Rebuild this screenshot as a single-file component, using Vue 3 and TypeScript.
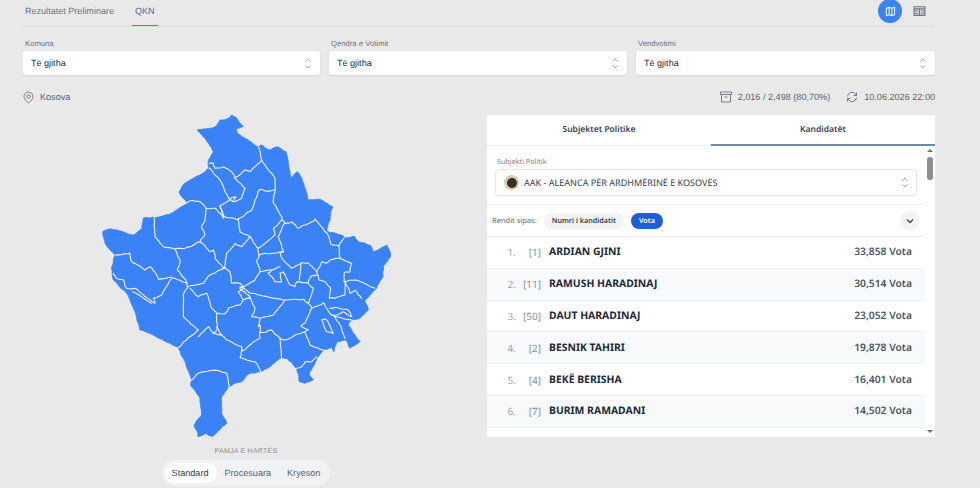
<script setup lang="ts">
const filters = [
  { label: 'Komuna', value: 'Të gjitha' },
  { label: 'Qendra e Votimit', value: 'Të gjitha' },
  { label: 'Vendvotimi', value: 'Të gjitha' },
]
const rows = [
  { pos: '1.', num: '[1]', name: 'ARDIAN GJINI', votes: '33,858 Vota' },
  { pos: '2.', num: '[11]', name: 'RAMUSH HARADINAJ', votes: '30,514 Vota' },
  { pos: '3.', num: '[50]', name: 'DAUT HARADINAJ', votes: '23,052 Vota' },
  { pos: '4.', num: '[2]', name: 'BESNIK TAHIRI', votes: '19,878 Vota' },
  { pos: '5.', num: '[4]', name: 'BEKË BERISHA', votes: '16,401 Vota' },
  { pos: '6.', num: '[7]', name: 'BURIM RAMADANI', votes: '14,502 Vota' },
]

type Pt = [number, number]

function parse(s: string): Pt[] {
  return s.trim().split(/\s+/).map((p) => {
    const [x, y] = p.split(',').map(Number)
    return [x, y] as Pt
  })
}

function noise(x: number, y: number): number {
  const v = Math.sin(x * 12.9898 + y * 78.233) * 43758.5453
  return (v - Math.floor(v)) * 2 - 1
}

function rough(a: Pt, b: Pt, amp: number): Pt[] {
  const dx = b[0] - a[0]
  const dy = b[1] - a[1]
  const len = Math.hypot(dx, dy)
  if (len < 3) return [b]
  const n = noise(a[0] + b[0], a[1] + b[1]) * amp
  const m: Pt = [(a[0] + b[0]) / 2 - (dy / len) * n, (a[1] + b[1]) / 2 + (dx / len) * n]
  return [...rough(a, m, amp * 0.7), ...rough(m, b, amp * 0.7)]
}

function toPath(s: string, closed: boolean): string {
  const pts = parse(s)
  const out: Pt[] = [pts[0]]
  for (let i = 1; i < pts.length; i++) out.push(...rough(pts[i - 1], pts[i], 0.7))
  if (closed) out.push(...rough(pts[pts.length - 1], pts[0], 0.7))
  return 'M' + out.map((p) => p[0].toFixed(1) + ' ' + p[1].toFixed(1)).join('L') + (closed ? 'Z' : '')
}

const outline = toPath(`197.3,130 210,128.3 215,126.7 220,120 226,119.3 231.7,115 236,117.3 243.3,126.7 236,128.3 237.3,133.3
248.3,140 258.3,146.7 261.7,145 270,150 277.3,146.7 286,151.7 291,178.3 297.3,171.7 301.7,178.3 308.3,200 320,199.3 332.7,206.7
330,220 326.7,231.7 341.7,235 345,238.3 355,236.7 358.3,241.7 370,245 373.3,251.7 386.7,245 390.7,255 383.3,266.7 383.3,276.7
376.7,288.3 365,300 368.3,310 360,318.3 351.7,320 348.3,325 355,335 360,341.7 350,348.3 346,340 336.7,341.7 334,351.7 331.7,347.7
323.3,350 316.7,358.3 309.3,373.3 313.3,380 305,383.3 299.3,381.7 296.7,368.3 286.7,358.3 280,358.3 270,366.7 260.7,371.7 250,373.3
241.7,381.7 235,383.3 228.3,386.7 221.7,396.7 221.7,413.3 226.7,423.3 211.7,436.7 206,433.3 198.3,436.7 194,425 201.7,415 200,398.3
190.7,385.7 191.7,380 185,361.7 178.3,347.7 170,343.3 155,336 140,330 135,311.7 126.7,293.3 113.3,280 111.7,266.7 115,255 105,243.3
102.7,231.7 110,229 123,231.7 133.3,235 141.7,228.3 143.3,218 153,217 170,213 187,203 179,192 185,183 190,180 200,175 209,168 208.3,160
213.3,151.7 206,140`, true)

const borders = [
  '209.3,163.3 213.3,163 215,168.3 223.3,166.7 231.7,171.7 235,178.3 245,170 250,171.7 261.7,160 258.3,146.7',
  '261.7,160 275,178.3 275,190 265,191 260,189.3 255,200 251.7,210 238.3,219.3 225,217.3 220,206 230,200 220,180 209,168',
  '235,178.3 245,188.3 241.7,198.3 233,201.7 230,198.3 236,197 233,201.7',
  '275,190 273,201.7 281.7,216.7 281.7,220 285,223.3',
  '220,206 223.3,218.3 215,208.3 206,208.3 200,201.7 190,200.7 170,213 154,217 155,236.7 163.3,246.7 175,249 185,248.3 193.3,245 200,241.7 205,235 201.7,228.3 205,220 206,208.3',
  '175,249 180,260 177.3,270 186,280 187.3,286.7',
  '200,241.7 210,251.7 213.3,250 215,258.3 225,268.3 226.7,253.3 235,243.3 241.7,246.7 250,236.7 258.3,248.3 275,235 273.3,228.3 281.7,220',
  '238.3,219.3 240,232 250,236.7',
  '225,268.3 220,270 210,275 203.3,283.3 189.3,286',
  '225,268.3 230,271.7 231.7,283.3 240,283.3 243.3,288.3 238.3,291.7 243.3,300 250,298.3 248.3,295 240,288.3',
  '115,255 130,253.3 131.7,261.7 145,270 150,266.7 156.7,275 158.3,279.3 171.7,277.3 187.3,283.3',
  '113.3,273.3 116.7,278.3 123.3,280 126.7,288.3 135,288.3 155,303.3 153.3,298.3 161.7,295 171.7,278.3',
  '133,291.7 151.7,303.3',
  '188.3,286.7 183.3,295 183.3,316.7 198.3,330 190,336.7 178.3,347.7',
  '190,288.3 198.3,296.7 206.7,293.3 211.7,308.3 216.7,313.3 225,314 228.3,308.3 240,305 243.3,300',
  '216.7,313.3 217.3,328.3 213.3,333.3 208.3,326.7 198.3,336.7',
  '213.3,333.3 221.7,335 216.7,326.7 217.3,328.3',
  '221.7,335 226.7,340 241.7,346.7 242.7,351 260,338.3 260,325 258.3,326.7 260,318.3 273.3,315 285,300',
  '241.7,346.7 240,357.7 255,361.7 260.7,371.7',
  '260,332 266.7,331.7 271.7,330 280,338.3 285,340 295,335 305,331.7 308.3,330 301,326 305,323.3 311.7,308.3 308.3,303.3 313.3,288.3 308.3,283.3',
  '280,338.3 281.7,358.3',
  '305,331.7 310,345 318.3,348.3 323.3,350',
  '296.7,368.3 301.7,366.7 305,361.7 311.7,361.7 316.7,356.7',
  '315,219 325,231.7 328,235 330.7,244 339,246 344,238',
  '339,246 340,258.3 330,260 326,263.3 321.7,261.7 316.7,271.7 308,262.7 301.7,262.7 291.7,268.3 283.3,260 280,253.3 283.3,251.7 278.3,236.7 281.7,228.3 285,223.3 291.7,221.7 298.3,228.3 305,225 315,220',
  '258.3,248.3 259,255 265,253.3 275,253.3 283.3,251.7',
  '259,255 256.7,261.7 260,271.7 271.7,270 280,266.7',
  '260,271.7 255,280 246.7,285 240,288.3',
  '271.7,270 268,273 275,281.7 281.7,281.7 280,273 283.3,271.7 290,285 295,286.7 296.7,281.7 308.3,283.3 310.7,276.7 316.7,275',
  '301.7,262.7 299.3,280',
  '316.7,271.7 319.3,280 325,281.7 330.7,288.3 329.3,298.3 335,298.3 345,295 345,281.7 350,293.3 355,290 361.7,298.3',
  '340,258.3 351.7,263.3 350,271.7 344,273.3 344,281.7 355,280 375,288.3',
  '240,286.7 250,293.3 260,295 275,298.3 285,300 303.3,299.3 308.3,303.3',
  '248.3,295 255,308.3 251.7,316.7 260,318.3',
  '311.7,308.3 323.3,302.7 331.7,315 335,316.7 351.7,320',
  '330,308.3 335,307.3 348.3,310 351.7,316.7 343.3,311.7 336.7,315 331.7,315',
  '335,316.7 340,325 345,338.3',
  '321.7,320 326,319.3 333.3,333.3 326.7,331.7 323.3,325 321.7,320',
  '191.7,380 198.3,373.3 213.3,370 226.7,373.3 229.3,386.7',
].map((b) => toPath(b, false))
</script>

<template>
  <div class="page">
    <header class="topbar">
      <nav class="tabs">
        <span class="tab">Rezultatet Preliminare</span>
        <span class="tab active">QKN</span>
      </nav>
      <div class="views">
        <span class="view on">
          <svg width="11" height="11" viewBox="0 0 24 24" fill="none" stroke="currentColor" stroke-width="2.400" stroke-linejoin="round"><path d="M3 5l6-2 6 2 6-2v16l-6 2-6-2-6 2zM9 3v16M15 5v16" /></svg>
        </span>
        <span class="view">
          <svg width="13" height="12" viewBox="0 0 24 22" fill="none" stroke="currentColor" stroke-width="2"><path d="M2 3h20v16H2zM2 7h20M2 11h8M14 11h8M2 15h8M14 15h8M12 7v12" /></svg>
        </span>
      </div>
    </header>

    <section class="filters">
      <div v-for="f in filters" :key="f.label" class="filter">
        <label>{{ f.label }}</label>
        <div class="select">
          <span>{{ f.value }}</span>
          <svg class="updown" width="8" height="11" viewBox="0 0 8 12" fill="none" stroke="#a3a8af" stroke-width="1"><path d="M1 4l3-3 3 3M1 8l3 3 3-3" /></svg>
        </div>
      </div>
    </section>

    <section class="info">
      <div class="info-item">
        <svg width="11" height="13" viewBox="0 0 22 24" fill="none" stroke="#6b7280" stroke-width="1.800"><path d="M11 23s9-6.500 9-13a9 9 0 0 0-18 0c0 6.500 9 13 9 13z" /><circle cx="11" cy="10" r="3.500" /></svg>
        <span>Kosova</span>
      </div>
      <div class="info-right">
        <div class="info-item">
          <svg width="12" height="12" viewBox="0 0 24 24" fill="none" stroke="#6b7280" stroke-width="1.800"><path d="M1 2h22v5H1zM3 7v15h18V7M9 12h6" /></svg>
          <span>2,016 / 2,498 (80,70%)</span>
        </div>
        <div class="info-item">
          <svg width="12" height="12" viewBox="0 0 24 24" fill="none" stroke="#6b7280" stroke-width="1.800"><path d="M3 11a9 9 0 0 1 16-5l2 3M21 3v6h-6M21 13a9 9 0 0 1-16 5l-2-3M3 21v-6h6" /></svg>
          <span>10.06.2026 22:00</span>
        </div>
      </div>
    </section>

    <main class="main">
      <div class="map-col">
        <svg class="map" viewBox="23 110 464 331" width="464" height="331">
          <path :d="outline" fill="#3b82f6" stroke="#3b82f6" stroke-width="0.800" stroke-linejoin="round" />
          <path v-for="b in borders" :key="b" :d="b" fill="none" stroke="#f0f4fb" stroke-width="1.100" stroke-linejoin="round" stroke-linecap="round" />
        </svg>
        <div class="map-label">PAMJA E HARTËS</div>
        <div class="seg">
          <span class="seg-item on">Standard</span>
          <span class="seg-item">Procesuara</span>
          <span class="seg-item">Kryeson</span>
        </div>
      </div>

      <div class="panel">
        <div class="panel-tabs">
          <span class="ptab">Subjektet Politike</span>
          <span class="ptab active">Kandidatët</span>
        </div>
        <div class="panel-body">
          <div class="content">
            <div class="subject">
              <label>Subjekti Politik</label>
              <div class="subject-select">
                <span class="avatar"><i></i></span>
                <span class="subject-name">AAK - ALEANCA PËR ARDHMËRINË E KOSOVËS</span>
                <svg class="updown" width="8" height="11" viewBox="0 0 8 12" fill="none" stroke="#a3a8af" stroke-width="1"><path d="M1 4l3-3 3 3M1 8l3 3 3-3" /></svg>
              </div>
            </div>
            <div class="sort">
              <span class="sort-label">Rendit sipas:</span>
              <span class="chip">Numri i kandidatit</span>
              <span class="chip sel">Vota</span>
              <span class="collapse">
                <svg width="10" height="10" viewBox="0 0 10 10" fill="none" stroke="#374151" stroke-width="1.300"><path d="M2 3.500l3 3 3-3" /></svg>
              </span>
            </div>
            <div v-for="r in rows" :key="r.pos" class="row">
              <span class="pos">{{ r.pos }}</span>
              <span class="num">{{ r.num }}</span>
              <span class="name">{{ r.name }}</span>
              <span class="votes">{{ r.votes }}</span>
            </div>
          </div>
          <div class="scroll">
            <span class="arrow up"></span>
            <span class="thumb"></span>
            <span class="spacer"></span>
            <span class="arrow down"></span>
          </div>
        </div>
      </div>
    </main>
  </div>
</template>

<style>
html, body { margin: 0; background: #e9e9e9; }
</style>

<style scoped>
.page {
  width: 980px;
  height: 488px;
  overflow: hidden;
  box-sizing: border-box;
  padding: 0 45px 0 23px;
  background: #e9e9e9;
  font-family: "Liberation Sans", Arial, sans-serif;
  text-rendering: geometricPrecision;
  color: #4b5563;
}
.topbar {
  display: flex;
  justify-content: space-between;
  height: 27px;
  box-sizing: border-box;
  border-bottom: 1px solid #dcdddf;
}
.tabs { display: flex; gap: 18px; padding-left: 2px; }
.tab {
  font-size: 9.050px;
  line-height: 23px;
  color: #6b7280;
  height: 26px;
  box-sizing: border-box;
}
.tab.active {
  color: #4a6fa5;
  border-bottom: 1.500px solid #5b7fb5;
  padding: 0 3px;
}
.views { display: flex; gap: 5px; padding-right: 4px; }
.view {
  width: 24px;
  height: 24px;
  border-radius: 50%;
  display: flex;
  align-items: center;
  justify-content: center;
  color: #6b7280;
  margin-top: -1px;
}
.view.on { background: #3b82f6; color: #e8f0fe; }
.filters {
  display: grid;
  grid-template-columns: 297px 298px 299px;
  gap: 9px;
  margin-top: 12px;
}
.filter label {
  display: block;
  font-size: 7.700px;
  line-height: 10px;
  color: #6b7280;
  padding-left: 2px;
  margin-bottom: 2px;
}
.select {
  height: 24px;
  background: #fff;
  border-radius: 3px;
  box-shadow: 0 1px 2px rgba(0,0,0,.08);
  display: flex;
  align-items: center;
  justify-content: space-between;
  padding: 0 8px 0 8px;
  font-size: 9.050px;
  color: #1f2937;
}
.info {
  display: flex;
  justify-content: space-between;
  align-items: center;
  margin-top: 15px;
  height: 14px;
  font-size: 9.100px;
  color: #5b6470;
}
.info-item { display: flex; align-items: center; gap: 6px; }
.info-right { display: flex; gap: 16px; }
.main {
  display: grid;
  grid-template-columns: 464px 448px;
  margin-top: 11px;
}
.map-col { display: flex; flex-direction: column; align-items: center; margin-top: -5px; }
.map { display: block; }
.map-label {
  font-size: 7px;
  line-height: 10px;
  letter-spacing: .25px;
  color: #8a8f96;
  margin-top: 6px;
  margin-left: -18px;
}
.seg {
  display: flex;
  align-items: center;
  height: 26px;
  margin-top: 3px;
  margin-left: -18px;
  padding: 0 2px 0 3px;
  box-sizing: border-box;
  background: #f1f2f4;
  border-radius: 13px;
  font-size: 9.100px;
  color: #5b6470;
}
.seg-item { padding: 0 8px; line-height: 20px; }
.seg-item.on { background: #fff; color: #374151; border-radius: 10px; padding: 0 8px 0 7px; }
.panel {
  height: 322px;
  background: #fff;
  font-family: "Noto Sans", "Open Sans", sans-serif;
  display: flex;
  flex-direction: column;
}
.panel-tabs {
  display: grid;
  grid-template-columns: 224px 224px;
  height: 30px;
  flex: none;
}
.ptab {
  text-align: center;
  font-size: 8.500px;
  font-weight: 600;
  line-height: 29px;
  color: #374151;
  border-bottom: 1px solid #f0f1f3;
  box-sizing: border-box;
}
.ptab.active { border-bottom: 2px solid #6f8ba3; }
.panel-body { flex: 1; display: flex; min-height: 0; }
.content { flex: 1; min-width: 0; overflow: hidden; }
.subject { padding: 12px 8px 8px; height: 60px; box-sizing: border-box; border-bottom: 1px solid #f0f1f3; }
.subject label { display: block; font-size: 7.200px; line-height: 10px; color: #7b828c; padding-left: 2px; margin-bottom: 2px; }
.subject-select {
  height: 27px;
  box-sizing: border-box;
  border: 1px solid #e5e7eb;
  border-radius: 4px;
  box-shadow: 0 1px 1px rgba(0,0,0,.05);
  display: flex;
  align-items: center;
  padding: 0 7px 0 8px;
}
.avatar {
  width: 15px;
  height: 15px;
  border-radius: 50%;
  background: #d9c9b0;
  display: flex;
  align-items: center;
  justify-content: center;
  flex: none;
}
.avatar i { width: 10px; height: 10px; border-radius: 50%; background: #3b2c25; }
.subject-name { flex: 1; margin-left: 5px; font-size: 9.050px; color: #374151; }
.sort {
  height: 32px;
  box-sizing: border-box;
  border-bottom: 1px solid #eef0f2;
  display: flex;
  align-items: center;
  padding: 0 5px;
  font-size: 7.500px;
}
.sort-label { color: #5b6470; margin-right: 7px; }
.chip { height: 16px; line-height: 16px; border-radius: 8px; padding: 0 8px; background: #f1f3f5; color: #374151; font-weight: 600; font-size: 7.200px; margin-right: 7px; }
.chip.sel { background: #1d5fd8; color: #fff; }
.collapse {
  margin-left: auto;
  width: 20px;
  height: 20px;
  border-radius: 50%;
  background: #f1f3f5;
  display: flex;
  align-items: center;
  justify-content: center;
}
.row {
  height: 31.800px;
  box-sizing: border-box;
  border-bottom: 1px solid #eef0f2;
  display: flex;
  align-items: center;
  padding-right: 13px;
}
.row:nth-of-type(even) { background: #f7f9fb; }
.pos { width: 30px; text-align: right; font-size: 10px; color: #a3a8af; padding-right: 1px; box-sizing: border-box; }
.num { width: 24px; text-align: right; font-size: 10px; color: #8a8f96; }
.name { flex: 1; margin-left: 8px; font-size: 10.400px; font-weight: 700; color: #1f2937; }
.votes { font-size: 10.300px; font-weight: 600; color: #4b5563; }
.scroll { width: 10px; flex: none; display: flex; flex-direction: column; align-items: center; padding: 4px 0 4px; box-sizing: border-box; }
.arrow { width: 0; height: 0; border-left: 3px solid transparent; border-right: 3px solid transparent; }
.arrow.up { border-bottom: 3px solid #6b7280; }
.arrow.down { border-top: 3px solid #6b7280; }
.thumb { width: 6px; height: 23px; background: #8a8d92; border-radius: 3px; margin-top: 5px; }
.spacer { flex: 1; }
</style>
